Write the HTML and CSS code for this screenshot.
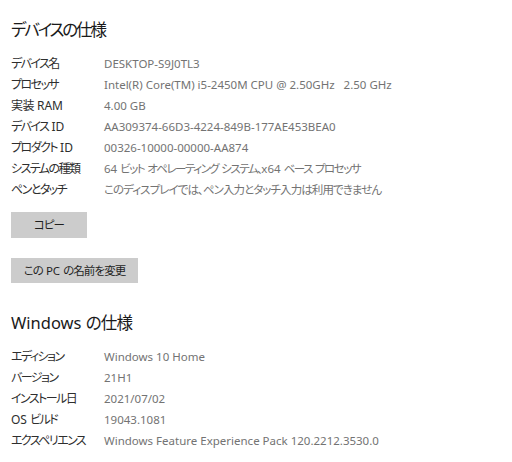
FILE: index.html
```html
<!DOCTYPE html>
<html lang="ja">
<head>
<meta charset="utf-8">
<title>デバイスの仕様</title>
<link rel="stylesheet" href="styles.css">
</head>
<body>
<main class="page">
  <h2 class="title"><span class="ja">デバイスの仕様</span></h2>
  <dl class="specs">
    <dt><span class="ja">デバイス名</span></dt><dd>DESKTOP-S9J0TL3</dd>
    <dt><span class="ja">プロセッサ</span></dt><dd>Intel(R) Core(TM) i5-2450M CPU @ 2.50GHz&nbsp;&nbsp; 2.50 GHz</dd>
    <dt><span class="kj">実装</span> RAM</dt><dd>4.00 GB</dd>
    <dt><span class="ja">デバイス</span> ID</dt><dd>AA309374-66D3-4224-849B-177AE453BEA0</dd>
    <dt><span class="ja">プロダクト</span> ID</dt><dd>00326-10000-00000-AA874</dd>
    <dt><span class="ja">システムの種類</span></dt><dd>64 <span class="ja">ビット</span> <span class="ja">オペレーティング</span> <span class="ja">システム、</span>x64 <span class="ja">ベース</span> <span class="ja">プロセッサ</span></dd>
    <dt><span class="ja">ペンとタッチ</span></dt><dd><span class="ja-soft">このディスプレイでは、ペン入力とタッチ入力は利用できません</span></dd>
  </dl>
  <div class="actions">
    <button class="btn btn-copy"><span class="ja-soft">コピー</span></button>
    <button class="btn btn-rename"><span class="ja-soft">この</span> PC <span class="ja-soft">の名前を変更</span></button>
  </div>
  <h2 class="title title-win">Windows <span class="kj">の仕様</span></h2>
  <dl class="specs">
    <dt><span class="ja">エディション</span></dt><dd>Windows 10 Home</dd>
    <dt><span class="ja">バージョン</span></dt><dd>21H1</dd>
    <dt><span class="ja">インストール日</span></dt><dd>2021/07/02</dd>
    <dt>OS <span class="ja">ビルド</span></dt><dd>19043.1081</dd>
    <dt><span class="ja">エクスペリエンス</span></dt><dd>Windows Feature Experience Pack 120.2212.3530.0</dd>
  </dl>
</main>
</body>
</html>
```
FILE: styles.css
```css
html, body {
  margin: 0;
  padding: 0;
  background: #ffffff;
}
body {
  font-family: "Noto Sans", "Noto Sans CJK JP", sans-serif;
  font-feature-settings: "palt";
  color: #1f1f1f;
}
.ja {
  letter-spacing: -0.13em;
}
.ja-soft {
  letter-spacing: -0.08em;
}
.kj {
  letter-spacing: -0.05em;
}
.page {
  padding: 18px 0 0 11px;
}
.title {
  margin: 0;
  font-size: 16.5px;
  font-weight: 400;
  line-height: 24px;
  color: #1a1a1a;
}
.specs {
  margin: 11px 0 0 0;
  display: grid;
  grid-template-columns: 93px auto;
  grid-auto-rows: 21px;
  font-size: 11.5px;
  line-height: 21px;
}
.specs dt {
  font-size: 12px;
  color: #2e2e2e;
  white-space: nowrap;
}
.specs dd {
  margin: 0;
  color: #737373;
  white-space: nowrap;
}
.actions {
  display: flex;
  flex-direction: column;
  align-items: flex-start;
  gap: 20px;
  margin-top: 12px;
}
.btn {
  border: none;
  background: #cccccc;
  color: #1f1f1f;
  font-family: "Noto Sans", "Noto Sans CJK JP", sans-serif;
  font-feature-settings: "palt";
  font-size: 11.5px;
  padding: 0;
  height: 26px;
  line-height: 26px;
}
.btn-copy {
  width: 76px;
}
.btn-rename {
  width: 127px;
  height: 25px;
  line-height: 25px;
}
.title-win {
  margin-top: 28px;
}
```
